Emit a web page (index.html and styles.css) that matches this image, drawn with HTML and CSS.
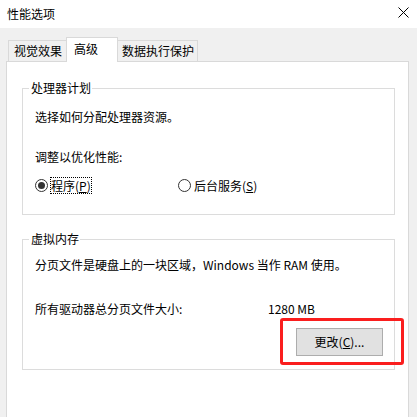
FILE: index.html
```html
<!DOCTYPE html>
<html lang="zh-CN">
<head>
<meta charset="utf-8">
<title>性能选项</title>
<link rel="stylesheet" href="styles.css">
</head>
<body>
<div class="window">
  <div class="titlebar">
    <span class="title">性能选项</span>
    <svg class="close" width="11" height="11" viewBox="0 0 11 11"><path d="M0.5 0.5 L10.5 10.5 M10.5 0.5 L0.5 10.5" stroke="#000" stroke-width="1" fill="none"/></svg>
  </div>
  <div class="body">
    <div class="tabs">
      <div class="tab t1">视觉效果</div>
      <div class="tab selected">高级</div>
      <div class="tab t3">数据执行保护</div>
    </div>
    <div class="panel">
      <fieldset class="group g1">
        <legend>处理器计划</legend>
        <p class="line l1">选择如何分配处理器资源。</p>
        <p class="line l2">调整以优化性能:</p>
        <div class="radios">
          <label class="radio first"><span class="dot on"></span><span class="rlabel focus">程序(<u>P</u>)</span></label>
          <label class="radio"><span class="dot"></span><span class="rlabel">后台服务(<u>S</u>)</span></label>
        </div>
      </fieldset>
      <fieldset class="group g2">
        <legend>虚拟内存</legend>
        <p class="line l3">分页文件是硬盘上的一块区域，Windows 当作 RAM 使用。</p>
        <div class="size-row">
          <span class="size-label">所有驱动器总分页文件大小:</span>
          <span class="size-value">1280 MB</span>
        </div>
        <div class="btn-row">
          <div class="btn-wrap">
            <button class="btn">更改(<u>C</u>)...</button>
            <div class="highlight"></div>
          </div>
        </div>
      </fieldset>
    </div>
  </div>
</div>
</body>
</html>
```
FILE: styles.css
```css
html, body {
  margin: 0;
  padding: 0;
}
body {
  font-family: "Noto Sans CJK SC", "Microsoft YaHei", sans-serif;
  font-size: 12px;
  line-height: 16px;
  color: #000;
}
.window {
  width: 417px;
  height: 417px;
  overflow: hidden;
  background: #f0f0f0;
}
.titlebar {
  height: 28px;
  background: #fff;
  display: flex;
  align-items: center;
  justify-content: space-between;
  padding: 0 8px 0 7px;
  box-sizing: border-box;
}
.close {
  align-self: flex-start;
  margin-top: 7px;
  display: block;
}
.body {
  padding: 9px 8px 0 6px;
}
.tabs {
  display: flex;
  align-items: flex-end;
  height: 24px;
  padding-left: 2px;
}
.tab {
  box-sizing: border-box;
  height: 21px;
  border: 1px solid #d9d9d9;
  border-bottom: none;
  background: #f0f0f0;
  padding-top: 2px;
  white-space: nowrap;
}
.t1 {
  width: 60px;
  padding-left: 5px;
}
.selected {
  position: relative;
  z-index: 1;
  margin-left: -2px;
  margin-bottom: -1px;
  width: 52px;
  height: 25px;
  background: #fff;
  padding-top: 3px;
  padding-left: 7px;
}
.t3 {
  margin-left: -1px;
  width: 81px;
  padding-left: 4px;
}
.panel {
  background: #fff;
  border: 1px solid #d9d9d9;
  width: 403px;
  height: 400px;
  box-sizing: border-box;
  padding: 18px 13px 0 15px;
}
.group {
  margin: 0;
  border: 1px solid #dcdcdc;
  padding: 0 0 0 12px;
  min-width: 0;
}
.group legend {
  margin-left: -6px;
  padding: 0 1px 0 2px;
  line-height: 16px;
}
.line {
  margin: 0;
  white-space: nowrap;
}
.l1 { margin-top: 13px; }
.l2 { margin-top: 24px; }
.radios {
  display: flex;
  margin-top: 12px;
  height: 17px;
}
.g1 { padding-bottom: 20px; }
.radio {
  display: flex;
  align-items: center;
}
.radio.first { width: 143px; }
.dot {
  box-sizing: border-box;
  width: 13px;
  height: 13px;
  border: 1px solid #333;
  border-radius: 50%;
  background: #fff;
  display: flex;
  align-items: center;
  justify-content: center;
}
.dot.on::after {
  content: "";
  width: 7px;
  height: 7px;
  border-radius: 50%;
  background: #333;
}
.rlabel {
  margin-left: 2px;
  border: 1px dotted transparent;
  padding: 0;
  height: 17px;
  box-sizing: border-box;
  line-height: 15px;
  white-space: nowrap;
}
.rlabel.focus { border-color: #000; }
.g2 {
  margin-top: 16px;
  padding-bottom: 13px;
}
.l3 { margin-top: 10px; }
.size-row {
  display: flex;
  margin-top: 28px;
}
.size-label { width: 233px; }
.btn-row {
  display: flex;
  justify-content: flex-end;
  padding-right: 11px;
  margin-top: 11px;
}
.btn-wrap {
  position: relative;
}
.btn {
  display: block;
  width: 87px;
  height: 28px;
  box-sizing: border-box;
  background: #e1e1e1;
  border: 1px solid #adadad;
  font: inherit;
  color: #000;
  padding: 0;
}
.highlight {
  position: absolute;
  left: -16px;
  top: -10px;
  width: 124px;
  height: 47px;
  box-sizing: border-box;
  border: 3px solid #fa1e1e;
  border-radius: 3px;
}
```
